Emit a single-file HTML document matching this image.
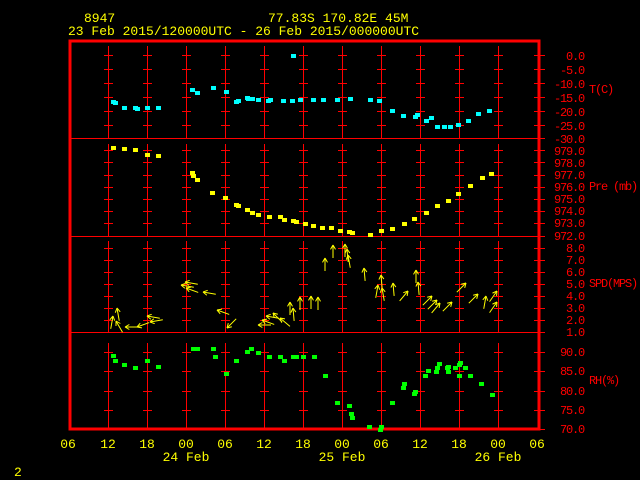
<!DOCTYPE html>
<html><head><meta charset="utf-8"><style>
html,body{margin:0;padding:0;background:#000;width:640px;height:480px;overflow:hidden}
svg{display:block}
text{font-family:"Liberation Mono",monospace;font-size:13px}
.y{fill:#ffff00}.r{fill:#ff0000}
.r text{font-size:12px;letter-spacing:-1.2px}
</style></head><body>
<svg id="s" width="640" height="480" xmlns="http://www.w3.org/2000/svg">
<g id="grid" stroke="#ff0000" stroke-width="1" shape-rendering="crispEdges"></g>
<rect x="70" y="41" width="469" height="388" fill="none" stroke="#ff0000" stroke-width="3" shape-rendering="crispEdges"/>
<g stroke="#ff0000" stroke-width="1" shape-rendering="crispEdges">
<line x1="70" y1="138.5" x2="545" y2="138.5"/>
<line x1="70" y1="236.5" x2="545" y2="236.5"/>
<line x1="70" y1="332.5" x2="545" y2="332.5"/>
</g>
<g id="pts"></g>
<g id="arr" stroke="#ffff00" stroke-width="1" fill="none"></g>
<text x="84" y="22" class="y">8947</text>
<text x="268" y="22" class="y">77.83S  170.82E    45M</text>
<text x="68" y="35" class="y">23 Feb 2015/120000UTC - 26 Feb 2015/000000UTC</text>
<g class="r" text-anchor="end">
<text x="584" y="60">0.0</text><text x="584" y="74">-5.0</text><text x="584" y="88">-10.0</text><text x="584" y="102">-15.0</text><text x="584" y="116">-20.0</text><text x="584" y="130">-25.0</text><text x="584" y="143">-30.0</text>
<text x="584" y="155">979.0</text><text x="584" y="167">978.0</text><text x="584" y="179">977.0</text><text x="584" y="191">976.0</text><text x="584" y="203">975.0</text><text x="584" y="215">974.0</text><text x="584" y="227">973.0</text><text x="584" y="240">972.0</text>
<text x="584" y="252">8.0</text><text x="584" y="264">7.0</text><text x="584" y="276">6.0</text><text x="584" y="288">5.0</text><text x="584" y="300">4.0</text><text x="584" y="312">3.0</text><text x="584" y="324">2.0</text><text x="584" y="336">1.0</text>
<text x="584" y="356">90.0</text><text x="584" y="375">85.0</text><text x="584" y="395">80.0</text><text x="584" y="414">75.0</text><text x="584" y="433">70.0</text>
</g>
<g class="r">
<text x="589" y="93">T(C)</text><text x="589" y="190">Pre (mb)</text><text x="589" y="287">SPD(MPS)</text><text x="589" y="384">RH(%)</text>
</g>
<g class="y" text-anchor="middle">
<text x="68" y="448">06</text><text x="108" y="448">12</text><text x="147" y="448">18</text><text x="186" y="448">00</text><text x="225" y="448">06</text><text x="264" y="448">12</text><text x="303" y="448">18</text><text x="342" y="448">00</text><text x="381" y="448">06</text><text x="420" y="448">12</text><text x="459" y="448">18</text><text x="498" y="448">00</text><text x="537" y="448">06</text>
<text x="186" y="461">24 Feb</text><text x="342" y="461">25 Feb</text><text x="498" y="461">26 Feb</text>
</g>
<text x="14" y="476" class="y">2</text>
</svg>
<script>
var NS="http://www.w3.org/2000/svg";
function el(p,t,a){var e=document.createElementNS(NS,t);for(var k in a)e.setAttribute(k,a[k]);p.appendChild(e);return e;}
var g=document.getElementById('grid');
var ticks=[55,69,83,97,111,125,150,162,175,187,199,211,223,248,260,272,284,296,308,320,352,371,391,410];
var xs=[];for(var i=0;i<11;i++)xs.push(Math.round(108+39*i)+0.5);
var panels=[[46,138],[144,236],[241,332],[343,428]];
xs.forEach(function(x){panels.forEach(function(p){el(g,'line',{x1:x,y1:p[0],x2:x,y2:p[1]});});
ticks.forEach(function(y){el(g,'line',{x1:x-4.5,y1:y+.5,x2:x+4.5,y2:y+.5});});});
ticks.concat([138,236,332,429]).forEach(function(y){el(g,'line',{x1:534,y1:y+.5,x2:545,y2:y+.5});});
var P=document.getElementById('pts');
function dots(arr,c){arr.forEach(function(p){el(P,'rect',{x:p[0]-2,y:p[1]-2,width:5,height:4,fill:c});});}
dots([[113,102],[115,103],[124,108],[135,108],[137,109],[147,108],[158,108],[192,90],[197,93],[213,88],[226,92],[236,102],[238,101],[247,98],[248,99],[252,99],[258,100],[268,101],[270,100],[283,101],[292,101],[300,100],[313,100],[323,100],[337,100],[350,99],[370,100],[379,101],[392,111],[403,116],[415,117],[417,115],[426,121],[431,118],[437,127],[444,127],[450,127],[458,125],[468,121],[478,114],[489,111],[293,56]],'#00ffff');
dots([[113,148],[124,149],[135,150],[147,155],[158,156],[192,173],[193,176],[197,180],[212,193],[225,198],[236,205],[238,206],[247,210],[252,213],[258,215],[269,217],[280,217],[284,220],[293,221],[296,222],[305,224],[313,226],[322,228],[331,228],[340,231],[349,232],[352,233],[370,235],[381,231],[392,229],[404,224],[414,219],[426,213],[437,206],[448,201],[458,194],[470,186],[482,178],[491,174]],'#ffff00');
dots([[113,356],[115,361],[124,365],[135,368],[147,361],[158,367],[193,349],[197,349],[213,349],[215,357],[226,374],[236,361],[247,352],[251,349],[258,353],[269,357],[280,357],[284,361],[293,357],[296,357],[303,357],[314,357],[325,376],[337,403],[349,406],[351,414],[352,418],[369,427],[381,427],[380,430],[392,403],[403,388],[404,384],[414,394],[415,392],[425,376],[428,371],[436,372],[437,368],[439,364],[447,368],[448,367],[448,372],[455,368],[459,365],[460,363],[459,376],[465,368],[470,376],[481,384],[492,395]],'#00ff00');
var A=document.getElementById('arr');
function arrow(x,y,deg){var a=deg*Math.PI/180,L=13,dx=Math.cos(a),dy=-Math.sin(a);
var tx=x-dx*L,ty=y-dy*L;el(A,'line',{x1:tx,y1:ty,x2:x,y2:y});
[150,-150].forEach(function(o){var b=a+o*Math.PI/180;el(A,'line',{x1:x,y1:y,x2:x+Math.cos(b)*5,y2:y-Math.sin(b)*5});});}
[[117,308,100],[113,316,80],[116,321,120],[125,327,180],[137,327,200],[147,316,170],[150,322,190],[181,285,170],[185,282,170],[186,288,160],[203,292,170],[217,310,160],[227,328,225],[258,325,180],[262,320,160],[266,316,170],[273,313,135],[280,318,140],[290,302,90],[293,308,95],[300,297,90],[311,296,90],[318,297,90],[325,258,90],[333,245,90],[345,244,90],[347,249,95],[348,255,100],[364,268,95],[381,275,95],[378,285,80],[382,288,100],[393,283,95],[408,291,50],[416,270,90],[418,282,95],[432,296,45],[437,300,45],[440,303,50],[452,302,45],[466,283,45],[478,294,45],[486,296,80],[497,291,55],[497,302,55]].forEach(function(v){arrow(v[0],v[1],v[2]);});
</script>
</body></html>
